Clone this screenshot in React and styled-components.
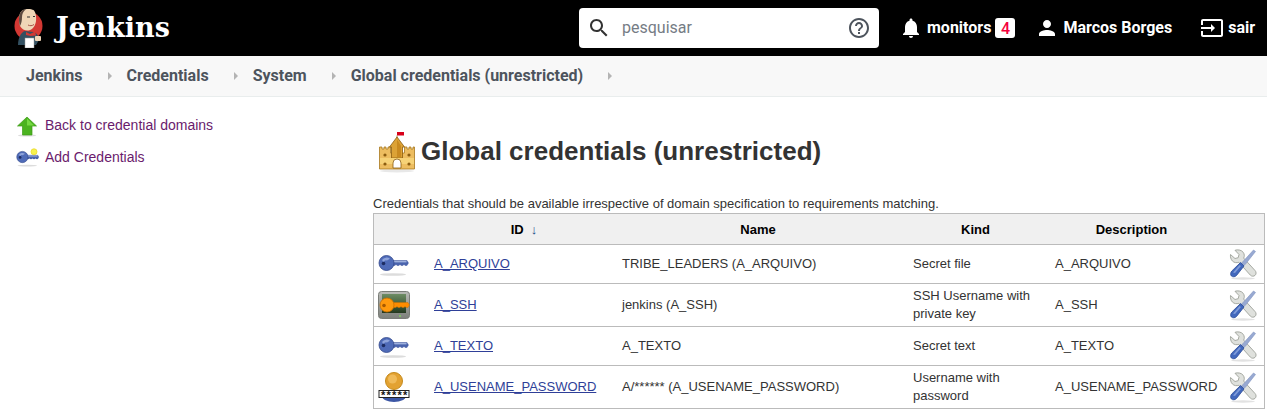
import React from 'react';
import styled, { createGlobalStyle } from 'styled-components';

const GlobalStyle = createGlobalStyle`
    html, body {
        margin: 0;
        padding: 0;
        background: #fff;
        overflow: hidden;
    }
    body {
        font-family: 'Liberation Sans', Arial, sans-serif;
        font-size: 13px;
        color: #333;
    }
`;

const Header = styled.header`
    display: flex;
    align-items: center;
    height: 56px;
    padding: 0 12px 0 14px;
    background: #000;
    color: #fff;
    box-sizing: border-box;
`;

const Brand = styled.div`
    display: flex;
    align-items: center;
    gap: 12px;
    width: 565px;
    flex: none;
`;

const BrandName = styled.span`
    margin-top: -2px;
    font-family: 'DejaVu Serif', Georgia, serif;
    font-weight: bold;
    font-size: 27px;
    letter-spacing: 0.1px;
    color: #fff;
    line-height: 1;
`;

const SearchBox = styled.div`
    display: flex;
    align-items: center;
    width: 300px;
    height: 40px;
    padding: 0 8px;
    box-sizing: border-box;
    background: #fff;
    border-radius: 4px;
    flex: none;
`;

const SearchText = styled.span`
    flex: 1;
    margin: -2px 0 0 11px;
    font-family: Roboto, sans-serif;
    font-size: 16px;
    color: #757c85;
`;

const HeaderLinks = styled.nav`
    display: flex;
    align-items: center;
    margin-left: 20px;
    flex: none;
`;

const HeaderLink = styled.span`
    display: flex;
    align-items: center;
    gap: 4px;
    margin-right: ${p => p.$after || 0}px;
    font-family: Roboto, sans-serif;
    font-weight: 700;
    font-size: 16px;
    color: #fff;
    white-space: nowrap;
`;

const HeaderLabel = styled.span`
    margin-top: -2px;
`;

const Badge = styled.span`
    display: inline-flex;
    align-items: center;
    justify-content: center;
    width: 20px;
    height: 20px;
    background: #fff;
    border-radius: 3px;
    color: #f5003d;
    font-size: 16px;
    font-weight: 500;
`;

const Crumbs = styled.div`
    display: flex;
    align-items: center;
    height: 41px;
    padding: 0 0 1px 26px;
    box-sizing: border-box;
    background: #f8f8f8;
    border-bottom: 1px solid #e9eded;
`;

const Crumb = styled.span`
    font-family: Roboto, sans-serif;
    font-weight: 700;
    font-size: 16px;
    color: #4d545d;
`;

const CrumbArrow = styled.span`
    width: 0;
    height: 0;
    margin: 1px 15px 0 25px;
    border-left: 4px solid #b4b4b4;
    border-top: 4px solid transparent;
    border-bottom: 4px solid transparent;
`;

const Layout = styled.div`
    display: flex;
`;

const Side = styled.aside`
    width: 373px;
    flex: none;
    padding: 16px 0 0 16px;
    box-sizing: border-box;
`;

const SideLink = styled.a`
    display: flex;
    align-items: center;
    height: 24px;
    margin-bottom: 8px;
    gap: 5px;
    font-size: 14px;
    color: #6a1b6d;
    text-decoration: none;
`;

const Main = styled.main`
    flex: 1;
    padding-right: 3px;
`;

const TitleRow = styled.div`
    display: flex;
    align-items: center;
    gap: 1px;
    height: 44px;
    margin: 33px 0 0 5px;
`;

const Title = styled.h1`
    margin: -2px 0 0;
    font-size: 26px;
    font-weight: bold;
    color: #333;
`;

const Lead = styled.p`
    margin: 22px 0 1px;
    font-size: 13px;
    line-height: 16px;
    color: #333;
`;

const Table = styled.table`
    width: 891px;
    table-layout: fixed;
    border-collapse: collapse;
    border: 1px solid #bbb;
    font-size: 13px;
    color: #333;
`;

const HeadCell = styled.th`
    height: 30px;
    padding: 0 ${p => p.$right || 9}px 0 ${p => p.$left || 9}px;
    background: #f0f0f0;
    border-bottom: 1px solid #bbb;
    color: #000;
    font-weight: bold;
    font-size: 13px;
    text-align: center;
`;

const SortMark = styled.span`
    margin-left: 7px;
    color: #204a87;
    font-weight: normal;
`;

const Row = styled.tr`
    height: ${p => (p.$tall ? 43 : 39)}px;
`;

const Cell = styled.td`
    padding: 0 9px 0 8.5px;
    border-top: 1px solid #bbb;
    line-height: 18px;
    vertical-align: middle;
`;

const IconCell = styled(Cell)`
    padding: 0 0 0 4px;
    line-height: 0;
`;

const ToolCell = styled(Cell)`
    padding: 0 0 0 8px;
    line-height: 0;
`;

const IdLink = styled.a`
    color: #2f3f98;
    text-decoration: underline;
`;

const MaterialIcon = ({ d, color = '#fff' }) => (
    <svg width="24" height="24" viewBox="0 0 24 24">
        <path d={d} fill={color} />
    </svg>
);

const SEARCH_PATH = 'M15.5 14h-.79l-.28-.27C15.41 12.59 16 11.11 16 9.5 16 5.91 13.09 3 9.5 3S3 5.91 3 9.5 5.91 16 9.5 16c1.61 0 3.09-.59 4.23-1.57l.27.28v.79l5 4.99L20.49 19l-4.99-5zm-6 0C7.01 14 5 11.99 5 9.5S7.01 5 9.5 5 14 7.01 14 9.5 11.99 14 9.5 14z';
const HELP_PATH = 'M11 18h2v-2h-2v2zm1-16C6.48 2 2 6.48 2 12s4.48 10 10 10 10-4.48 10-10S17.52 2 12 2zm0 18c-4.41 0-8-3.59-8-8s3.59-8 8-8 8 3.59 8 8-3.59 8-8 8zm0-14c-2.21 0-4 1.79-4 4h2c0-1.1.9-2 2-2s2 .9 2 2c0 2-3 1.75-3 5h2c0-2.25 3-2.5 3-5 0-2.21-1.79-4-4-4z';
const BELL_PATH = 'M12 22c1.1 0 2-.9 2-2h-4c0 1.1.89 2 2 2zm6-6v-5c0-3.07-1.64-5.64-4.5-6.32V4c0-.83-.67-1.5-1.5-1.5s-1.5.67-1.5 1.5v.68C7.63 5.36 6 7.92 6 11v5l-2 2v1h16v-1l-2-2z';
const PERSON_PATH = 'M12 12c2.21 0 4-1.79 4-4s-1.79-4-4-4-4 1.79-4 4 1.79 4 4 4zm0 2c-2.67 0-8 1.34-8 4v2h16v-2c0-2.66-5.33-4-8-4z';
const INPUT_PATH = 'M21 3.01H3c-1.1 0-2 .9-2 2V9h2V4.99h18v14.03H3V15H1v4.01c0 1.1.9 1.98 2 1.98h18c1.1 0 2-.88 2-1.98v-14c0-1.11-.9-2-2-2zM11 16l4-4-4-4v3H1v2h10v3z';

const KeyIcon = ({ small }) => (
    <svg width={small ? 24 : 32} height="24" viewBox={small ? '0 -6 32 32' : '0 -1 32 24'}>
        <ellipse cx="15" cy="21.5" rx="13" ry="1.3" fill="#dcdcdc" />
        <path d="M13 7.500h16l1.500 2.500-1.500 2.500h-2l-1-1-1 1h-2l-1-1-1 1h-2l-1-1-1 1h-4z" fill="#4a64ae" stroke="#3a5199" strokeWidth="0.4" />
        <rect x="14" y="8" width="14.500" height="1.400" fill="#9eb0dd" />
        <circle cx="8.500" cy="10" r="7.500" fill="#4f6bb8" stroke="#34498c" strokeWidth="0.8" />
        <path d="M4 7a5.500 5.500 0 0 1 8-1.200l-3 1.700a3 3 0 0 0-3.500 1.500z" fill="#8ea3da" />
        <circle cx="5.500" cy="10.500" r="1.800" fill="#1d2d63" />
        {small && <circle cx="24" cy="3" r="4" fill="#f7f24e" stroke="#e8d72a" />}
    </svg>
);

const SshIcon = () => (
    <svg width="32" height="28" viewBox="0 0 32 28">
        <defs>
            <linearGradient id="sshFrame" x1="0" y1="0" x2="0" y2="1">
                <stop offset="0" stopColor="#b9bbb6" />
                <stop offset="1" stopColor="#7d807b" />
            </linearGradient>
            <linearGradient id="sshScreen" x1="0" y1="0" x2="0" y2="1">
                <stop offset="0" stopColor="#6d8d64" />
                <stop offset="1" stopColor="#23381f" />
            </linearGradient>
        </defs>
        <rect x="0.500" y="0.500" width="31" height="27" rx="3" fill="url(#sshFrame)" stroke="#7a7d78" />
        <rect x="4" y="3" width="24" height="19" fill="url(#sshScreen)" />
        <path d="M12 11.500h18l1.500 2.500-1.500 2.500h-2l-1-1-1 1h-2l-1-1-1 1h-2l-1-1-1 1h-6z" fill="#ff8c00" stroke="#c96f00" strokeWidth="0.4" />
        <circle cx="9" cy="14" r="7" fill="#ff9a0e" stroke="#c96f00" strokeWidth="0.8" />
        <circle cx="6" cy="14.500" r="1.800" fill="#a85a00" />
        <circle cx="22" cy="25" r="1" fill="#7fcf5f" />
    </svg>
);

const UserPassIcon = () => (
    <svg width="32" height="32" viewBox="0 0 32 32">
        <ellipse cx="16" cy="25" rx="12" ry="6" fill="#3c57a5" />
        <circle cx="16" cy="10" r="8.500" fill="#e3a232" stroke="#c58a1c" />
        <circle cx="14.500" cy="8" r="4.500" fill="#f0bb5a" />
        <rect x="1" y="19.500" width="30" height="7" fill="#fff" stroke="#222" />
        <text x="3" y="28" fontFamily="Liberation Sans, sans-serif" fontWeight="bold" fontSize="11" letterSpacing="1.200" fill="#111">*****</text>
    </svg>
);

const ToolsIcon = () => (
    <svg width="28" height="31" viewBox="0 0 28 31">
        <ellipse cx="14" cy="29.500" rx="12" ry="1.200" fill="#e2e2e2" />
        <path
            d="M1.500 5.500l4.500 4 3.200-.8.800-3.200-4-4.200c3-1 6.500-.3 8.200 2 1.300 1.800 1.400 4 .5 5.800l11.300 12.400c1.400 1.500 1.400 3.500.1 4.800-1.300 1.300-3.400 1.200-4.800-.2L9.800 13.300c-2.200.8-4.700.4-6.300-1.200-1.700-1.700-2.300-4.200-2-6.600z"
            fill="#dfe1dd"
            stroke="#9ea29a"
            strokeWidth="0.9"
        />
        <path d="M26.500 2.500l-2-1.500-10 11-2 2 2.500 2.500 2-2z" fill="#98a9d2" stroke="#7f93c0" strokeWidth="0.6" />
        <path d="M11.500 13.500l3.500 3.500-7.500 9.500c-1.500 1.500-3.800 1.800-5.100.5-1.200-1.300-1-3.600.5-5.100z" fill="#4268bd" stroke="#2a4a96" strokeWidth="0.8" />
        <path d="M10.500 16l1.500 1-6 7-2-.5z" fill="#7f9bd9" />
    </svg>
);

const ArrowIcon = () => (
    <svg width="24" height="24" viewBox="0 0 24 24">
        <ellipse cx="11" cy="22.500" rx="9" ry="1" fill="#ddd" />
        <path d="M11 4L20.500 13H16V22H6.500V13H1.500z" fill="#4bb31f" stroke="#3f9c19" strokeWidth="0.7" />
        <path d="M11 5.500L18 12.500H11z" fill="#76d842" />
    </svg>
);

const CastleIcon = () => (
    <svg width="42" height="44" viewBox="0 0 42 44">
        <ellipse cx="19" cy="41" rx="17" ry="1.500" fill="#e8e8e8" />
        <rect x="19" y="2" width="7" height="3.500" fill="#d8001a" />
        <path d="M19 5.500V8" stroke="#8c5d10" strokeWidth="0.8" />
        <path d="M1.500 17h2.500v2h2v-2h2v2h2v-2h2.500v6h14v-6h2.500v2h2v-2h2v2h2v-2h1.500v22H1.500z" fill="#edbd60" stroke="#a87820" strokeWidth="0.8" />
        <path d="M11.500 17L19 7l7.500 10h-2v11h-11V17z" fill="#dca236" stroke="#8c5d10" strokeWidth="0.8" />
        <path d="M19 9.500l4 6.500v11h-4z" fill="#c98a20" />
        <rect x="2" y="28" width="34" height="6" fill="#f6d277" />
        <path d="M15 38v-5a4 4 0 0 1 8 0v5z" fill="#fff" stroke="#8c5d10" strokeWidth="0.8" />
        <circle cx="7" cy="25" r="1.600" fill="#8c5d10" />
        <circle cx="31" cy="25" r="1.600" fill="#8c5d10" />
        <circle cx="7" cy="34" r="1.600" fill="#8c5d10" />
        <circle cx="31" cy="34" r="1.600" fill="#8c5d10" />
    </svg>
);

const JenkinsLogo = () => (
    <svg width="30" height="40" viewBox="0 0 30 40">
        <circle cx="14.500" cy="18" r="14" fill="#d33833" />
        <path d="M4 37c0-7 3-13 7-14l8 1c4 1 6 4 6 8l-3 5H6z" fill="#335061" />
        <path d="M6 18C4 11 5 4 9 2c3-1.500 8-1.500 10.500 0 2.500 2 3 8 2.500 11-.5 4-3 9-7.500 9.500-3.500.3-6.500-1-8.500-4.500z" fill="#f0d6b7" />
        <path d="M6 18C4 11 5 4 9 2c1-.5 2-.7 3-.8-3 2-4 5-4 8 0 3-.5 6-2 8.800z" fill="#5d4a40" />
        <path d="M13 9h3M19 8.500h2" stroke="#333" strokeWidth="1" />
        <path d="M14 17c2 1 4 1 6-.5" stroke="#a5534a" strokeWidth="1" fill="none" />
        <path d="M12 24l4 2 5-2.500 1 4-5.500.5-4.500-1z" fill="#d33833" />
        <rect x="11" y="30" width="9" height="10" fill="#fff" stroke="#999" strokeWidth="0.5" />
        <rect x="21" y="28" width="6" height="5" rx="1" fill="#f0d6b7" />
    </svg>
);

const credentials = [
    { id: 'A_ARQUIVO', name: 'TRIBE_LEADERS (A_ARQUIVO)', kind: 'Secret file', description: 'A_ARQUIVO', icon: <KeyIcon /> },
    { id: 'A_SSH', name: 'jenkins (A_SSH)', kind: 'SSH Username with private key', description: 'A_SSH', icon: <SshIcon />, tall: true },
    { id: 'A_TEXTO', name: 'A_TEXTO', kind: 'Secret text', description: 'A_TEXTO', icon: <KeyIcon /> },
    { id: 'A_USENAME_PASSWORD', name: 'A/****** (A_USENAME_PASSWORD)', kind: 'Username with password', description: 'A_USENAME_PASSWORD', icon: <UserPassIcon />, tall: true },
];

export default function App() {
    return (
        <>
            <GlobalStyle />
            <Header>
                <Brand>
                    <JenkinsLogo />
                    <BrandName>Jenkins</BrandName>
                </Brand>
                <SearchBox>
                    <MaterialIcon d={SEARCH_PATH} color="#333" />
                    <SearchText>pesquisar</SearchText>
                    <MaterialIcon d={HELP_PATH} color="#4d545d" />
                </SearchBox>
                <HeaderLinks>
                    <HeaderLink $after={20}>
                        <MaterialIcon d={BELL_PATH} />
                        <HeaderLabel>monitors</HeaderLabel>
                        <Badge>4</Badge>
                    </HeaderLink>
                    <HeaderLink $after={28}>
                        <MaterialIcon d={PERSON_PATH} />
                        <HeaderLabel>Marcos Borges</HeaderLabel>
                    </HeaderLink>
                    <HeaderLink>
                        <MaterialIcon d={INPUT_PATH} />
                        <HeaderLabel>sair</HeaderLabel>
                    </HeaderLink>
                </HeaderLinks>
            </Header>
            <Crumbs>
                <Crumb>Jenkins</Crumb>
                <CrumbArrow />
                <Crumb>Credentials</Crumb>
                <CrumbArrow />
                <Crumb>System</Crumb>
                <CrumbArrow />
                <Crumb>Global credentials (unrestricted)</Crumb>
                <CrumbArrow />
            </Crumbs>
            <Layout>
                <Side>
                    <SideLink href="#">
                        <ArrowIcon />
                        Back to credential domains
                    </SideLink>
                    <SideLink href="#">
                        <KeyIcon small />
                        Add Credentials
                    </SideLink>
                </Side>
                <Main>
                    <TitleRow>
                        <CastleIcon />
                        <Title>Global credentials (unrestricted)</Title>
                    </TitleRow>
                    <Lead>Credentials that should be available irrespective of domain specification to requirements matching.</Lead>
                    <Table>
                        <colgroup>
                            <col width="52" />
                            <col width="188" />
                            <col width="291" />
                            <col width="142" />
                            <col width="174" />
                            <col width="44" />
                        </colgroup>
                        <thead>
                            <tr>
                                <HeadCell />
                                <HeadCell $left={18}>
                                    ID<SortMark>↓</SortMark>
                                </HeadCell>
                                <HeadCell $right={11}>Name</HeadCell>
                                <HeadCell>Kind</HeadCell>
                                <HeadCell $right={13}>Description</HeadCell>
                                <HeadCell />
                            </tr>
                        </thead>
                        <tbody>
                            {credentials.map(item => (
                                <Row key={item.id} $tall={item.tall}>
                                    <IconCell>{item.icon}</IconCell>
                                    <Cell>
                                        <IdLink href="#">{item.id}</IdLink>
                                    </Cell>
                                    <Cell>{item.name}</Cell>
                                    <Cell>{item.kind}</Cell>
                                    <Cell>{item.description}</Cell>
                                    <ToolCell>
                                        <ToolsIcon />
                                    </ToolCell>
                                </Row>
                            ))}
                        </tbody>
                    </Table>
                </Main>
            </Layout>
        </>
    );
}
